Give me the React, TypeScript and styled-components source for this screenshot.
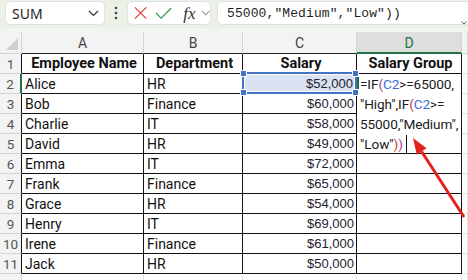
import React from "react";
import styled, { createGlobalStyle } from "styled-components";

const GlobalStyle = createGlobalStyle`
  html, body {
    margin: 0;
    padding: 0;
    background: #ffffff;
  }
  body {
    font-family: Roboto, "Liberation Sans", sans-serif;
  }
`;

type Row = { name: string; dept: string; salary: string };

const rows: Row[] = [
  { name: "Alice", dept: "HR", salary: "$52,000" },
  { name: "Bob", dept: "Finance", salary: "$60,000" },
  { name: "Charlie", dept: "IT", salary: "$58,000" },
  { name: "David", dept: "HR", salary: "$49,000" },
  { name: "Emma", dept: "IT", salary: "$72,000" },
  { name: "Frank", dept: "Finance", salary: "$65,000" },
  { name: "Grace", dept: "HR", salary: "$54,000" },
  { name: "Henry", dept: "IT", salary: "$69,000" },
  { name: "Irene", dept: "Finance", salary: "$61,000" },
  { name: "Jack", dept: "HR", salary: "$50,000" },
];

const columns = ["A", "B", "C", "D"];

const App = () => {
  return (
    <>
      <GlobalStyle />
      <Page>
        <Toolbar>
          <NameBox>
            <span>SUM</span>
            <Chevron />
          </NameBox>
          <Dots>
            <svg width="4" height="14" viewBox="0 0 4 14">
              <circle cx="2" cy="2" r="1.3" fill="#444" />
              <circle cx="2" cy="7" r="1.3" fill="#444" />
              <circle cx="2" cy="12" r="1.3" fill="#444" />
            </svg>
          </Dots>
          <ButtonGroup>
            <svg width="14" height="14" viewBox="0 0 14 14">
              <path d="M1 1 L13 13 M13 1 L1 13" stroke="#e3403a" strokeWidth="1.3" fill="none" />
            </svg>
            <svg width="18" height="14" viewBox="0 0 18 14">
              <path d="M1 7 L6.5 12.5 L17 2" stroke="#2f9e4f" strokeWidth="1.3" fill="none" />
            </svg>
            <Fx>fx</Fx>
            <Chevron small />
          </ButtonGroup>
          <FormulaBar>
            <FormulaText>55000,"Medium","Low"))</FormulaText>
            <BarCaret>
              <svg width="6" height="4" viewBox="0 0 6 4">
                <path d="M0.5 0.5 L3 3 L5.5 0.5" stroke="#555" strokeWidth="1" fill="none" />
              </svg>
            </BarCaret>
          </FormulaBar>
        </Toolbar>

        <Sheet>
          <Corner>
            <Triangle />
          </Corner>
          {columns.map((c) => (
            <ColHead key={c} $active={c === "D"}>
              {c}
            </ColHead>
          ))}
          <ColHead $outside />

          <RowHead $table>1</RowHead>
          <Cell $bold $align="center">Employee Name</Cell>
          <Cell $bold $align="center">Department</Cell>
          <Cell $bold $align="center">Salary</Cell>
          <Cell $bold $align="center">Salary Group</Cell>
          <Cell $outside />

          {rows.map((r, i) => (
            <React.Fragment key={r.name}>
              <RowHead $table $active={i === 0}>
                {i + 2}
              </RowHead>
              <Cell>{r.name}</Cell>
              <Cell>{r.dept}</Cell>
              {i === 0 ? (
                <RefCell>
                  {r.salary}
                  <RefBox>
                    <Handle $top $left />
                    <Handle $top />
                    <Handle $left />
                    <Handle />
                  </RefBox>
                </RefCell>
              ) : (
                <Cell $money>{r.salary}</Cell>
              )}
              <Cell />
              <Cell $outside />
            </React.Fragment>
          ))}

          {/* row 12 is scrolled almost out of view, only its top edge shows */}
          <RowHead />
          <Cell $outside />
          <Cell $outside />
          <Cell $outside />
          <Cell $outside />
          <Cell $outside />

          <Editor>
            <EditLine>
              =IF<Paren $c="#a23b8f">(</Paren>
              <Ref>C2</Ref>&gt;=65000,
            </EditLine>
            <EditLine>
              "High",IF<Paren $c="#c0392b">(</Paren>
              <Ref>C2</Ref>&gt;=
            </EditLine>
            <EditLine>55000,"Medium",</EditLine>
            <EditLine>
              "Low"<Paren $c="#c0392b">)</Paren>
              <Paren $c="#a23b8f">)</Paren>
              <Cursor />
            </EditLine>
          </Editor>
        </Sheet>

        <Arrow width="468" height="280" viewBox="0 0 468 280">
          <line x1="421.6" y1="151.5" x2="464" y2="217" stroke="#e5211d" strokeWidth="3" />
          <polygon points="413,138 426.5,148.3 416.8,154.7" fill="#e5211d" />
        </Arrow>
      </Page>
    </>
  );
};

const Chevron = ({ small }: { small?: boolean }) => (
  <ChevronIcon
    width={small ? 10 : 11}
    height={small ? 6 : 7}
    viewBox="0 0 11 7"
  >
    <path
      d="M1 1 L5.5 5.5 L10 1"
      stroke={small ? "#9a9a9a" : "#333"}
      strokeWidth="1.2"
      fill="none"
    />
  </ChevronIcon>
);

const Page = styled.div`
  position: relative;
  width: 468px;
  height: 280px;
  overflow: hidden;
  background: #ffffff;
`;

const Toolbar = styled.div`
  height: 32px;
  box-sizing: border-box;
  padding: 1px 0 0 5px;
  background: linear-gradient(#ebf1e6 0, #ebf1e6 28px, #f1f5ee 28px);
  display: flex;
  align-items: flex-start;
`;

const NameBox = styled.div`
  width: 100px;
  height: 24px;
  box-sizing: border-box;
  background: #ffffff;
  border: 1px solid #dfe3dc;
  border-radius: 5px;
  display: flex;
  align-items: center;
  justify-content: space-between;
  padding: 0 5px 0 6px;
  font-family: "Noto Sans", Roboto, sans-serif;
  font-size: 14px;
  color: #1f1f1f;
`;

const ChevronIcon = styled.svg`
  display: block;
`;

const Dots = styled.div`
  width: 22px;
  height: 24px;
  display: flex;
  align-items: center;
  justify-content: center;
`;

const ButtonGroup = styled.div`
  width: 84px;
  height: 24px;
  box-sizing: border-box;
  background: #ffffff;
  border: 1px solid #dfe3dc;
  border-radius: 5px;
  display: flex;
  align-items: center;
  gap: 8px;
  padding: 0 0 0 6px;
`;

const Fx = styled.span`
  font-family: "Liberation Serif", serif;
  font-style: italic;
  font-size: 17px;
  color: #333;
  margin-left: 3px;
  margin-right: -3px;
  line-height: 1;
`;

const FormulaBar = styled.div`
  flex: 1;
  margin-left: 6px;
  height: 24px;
  box-sizing: border-box;
  background: #ffffff;
  border: 1px solid #dfe3dc;
  border-right: none;
  border-radius: 5px 0 0 5px;
  display: flex;
  align-items: center;
  padding-left: 9px;
  position: relative;
`;

const FormulaText = styled.span`
  font-family: "Liberation Mono", monospace;
  font-size: 13px;
  letter-spacing: 0.1px;
  color: #1f1f1f;
  white-space: pre;
`;

const BarCaret = styled.div`
  position: absolute;
  right: 1px;
  top: 8px;
`;

const Sheet = styled.div`
  position: relative;
  display: grid;
  grid-template-columns: 22px 122px 99px 114px 105px 1fr;
  grid-template-rows: 22px repeat(12, 20px);
`;

const Corner = styled.div`
  background: #f3f3f3;
  border-right: 1px solid #d4d4d4;
  border-bottom: 1px solid #d4d4d4;
  position: relative;
`;

const Triangle = styled.div`
  position: absolute;
  right: 3px;
  bottom: 3px;
  width: 0;
  height: 0;
  border-left: 12px solid transparent;
  border-bottom: 12px solid #cfcfcf;
`;

const ColHead = styled.div<{ $active?: boolean; $outside?: boolean }>`
  box-sizing: border-box;
  background: ${(p) => (p.$active ? "#dedede" : "#f3f3f3")};
  border-right: 1px solid #d4d4d4;
  border-bottom: ${(p) =>
    p.$active ? "2px solid #217346" : p.$outside ? "1px solid #d4d4d4" : "1px solid #222"};
  color: ${(p) => (p.$active ? "#217346" : "#444")};
  font-size: 14px;
  display: flex;
  align-items: center;
  justify-content: center;
  padding-top: ${(p) => (p.$active ? "1px" : "0")};
`;

const RowHead = styled.div<{ $active?: boolean; $table?: boolean }>`
  box-sizing: border-box;
  background: #f3f3f3;
  border-right: ${(p) =>
    p.$active ? "2px solid #217346" : p.$table ? "1px solid #111" : "1px solid #d4d4d4"};
  border-bottom: 1px solid #d4d4d4;
  color: #555;
  font-size: 13.5px;
  display: flex;
  align-items: center;
  justify-content: center;
`;

const Cell = styled.div<{
  $bold?: boolean;
  $align?: "left" | "center" | "right";
  $money?: boolean;
  $outside?: boolean;
}>`
  box-sizing: border-box;
  background: #ffffff;
  border-right: 1px solid ${(p) => (p.$outside ? "#e1e1e1" : "#111")};
  border-bottom: 1px solid ${(p) => (p.$outside ? "#e1e1e1" : "#111")};
  display: flex;
  align-items: center;
  justify-content: ${(p) =>
    p.$money ? "flex-end" : p.$align === "center" ? "center" : "flex-start"};
  padding: ${(p) => (p.$money ? "0 2px 0 0" : "0 0 0 3px")};
  font-family: ${(p) =>
    p.$money ? '"Liberation Sans", Arial, sans-serif' : "Roboto, sans-serif"};
  font-size: ${(p) => (p.$money ? "13px" : p.$bold ? "14.5px" : "14px")};
  font-weight: ${(p) => (p.$bold ? 700 : 400)};
  color: ${(p) => (p.$money ? "#1c2230" : "#111")};
  white-space: nowrap;
  overflow: hidden;
`;

const RefCell = styled.div`
  position: relative;
  z-index: 2;
  box-sizing: border-box;
  background: #dae3f3;
  border-right: 1px solid #111;
  border-bottom: 1px solid #111;
  display: flex;
  align-items: center;
  justify-content: flex-end;
  padding-right: 3px;
  font-family: "Liberation Sans", Arial, sans-serif;
  font-size: 13px;
  color: #1c2230;
`;

const RefBox = styled.div`
  position: absolute;
  top: -2px;
  left: -1px;
  right: -1px;
  bottom: -1px;
  border: 2px solid #4472c4;
  box-shadow: inset 0 0 0 1px #ffffff;
  pointer-events: none;
`;

const Handle = styled.div<{ $top?: boolean; $left?: boolean }>`
  position: absolute;
  width: 5px;
  height: 5px;
  background: #4472c4;
  border: 1px solid #ffffff;
  ${(p) => (p.$top ? "top: -4px;" : "bottom: -4px;")}
  ${(p) => (p.$left ? "left: -4px;" : "right: -4px;")}
`;

const Editor = styled.div`
  position: absolute;
  left: 357px;
  top: 42px;
  width: 104px;
  height: 79px;
  background: linear-gradient(#217346, #217346) 0 0 / 2px 20px no-repeat, #ffffff;
  padding-left: 3px;
  box-sizing: border-box;
  font-family: Roboto, sans-serif;
  font-size: 13.6px;
  letter-spacing: -0.1px;
  color: #1a1a1a;
  z-index: 1;
`;

const EditLine = styled.div`
  height: 20px;
  line-height: 20px;
  white-space: nowrap;
  display: flex;
  align-items: center;
`;

const Paren = styled.span<{ $c: string }>`
  color: ${(p) => p.$c};
`;

const Ref = styled.span`
  color: #3a70d4;
`;

const Cursor = styled.span`
  display: inline-block;
  width: 1px;
  height: 18px;
  margin-left: 3px;
  background: #111;
`;

const Arrow = styled.svg`
  position: absolute;
  left: 0;
  top: 0;
  pointer-events: none;
  z-index: 5;
`;

export default App;
